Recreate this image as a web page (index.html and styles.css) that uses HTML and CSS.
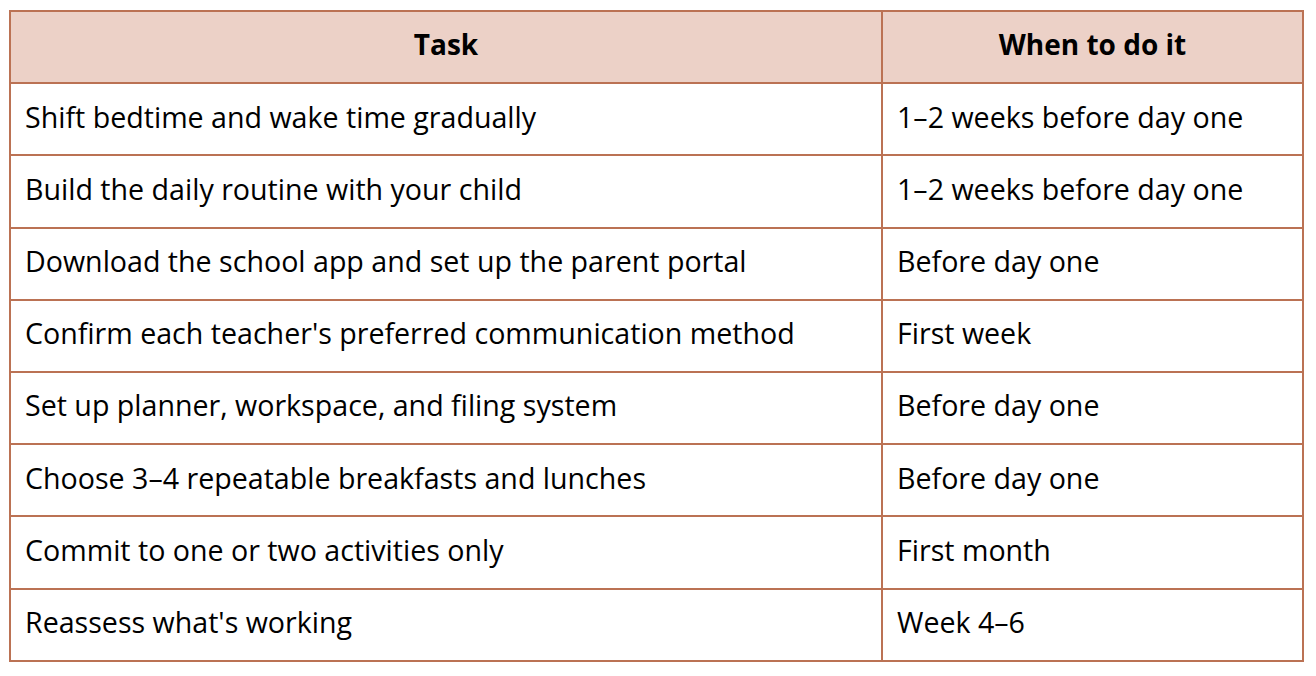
FILE: index.html
```html
<!DOCTYPE html>
<html>
<head>
<meta charset="utf-8">
<link rel="stylesheet" href="styles.css">
</head>
<body>
<table class="plan">
  <colgroup><col class="c1"><col class="c2"></colgroup>
  <thead>
    <tr><th>Task</th><th>When to do it</th></tr>
  </thead>
  <tbody>
    <tr><td>Shift bedtime and wake time gradually</td><td>1–2 weeks before day one</td></tr>
    <tr><td>Build the daily routine with your child</td><td>1–2 weeks before day one</td></tr>
    <tr><td>Download the school app and set up the parent portal</td><td>Before day one</td></tr>
    <tr><td>Confirm each teacher's preferred communication method</td><td>First week</td></tr>
    <tr><td>Set up planner, workspace, and filing system</td><td>Before day one</td></tr>
    <tr><td>Choose 3–4 repeatable breakfasts and lunches</td><td>Before day one</td></tr>
    <tr><td>Commit to one or two activities only</td><td>First month</td></tr>
    <tr><td>Reassess what's working</td><td>Week 4–6</td></tr>
  </tbody>
</table>
</body>
</html>
```
FILE: styles.css
```css
html, body { margin: 0; padding: 0; background: #fff; }
body { padding: 10px 0 0 9px; font-family: "Open Sans", Inter, sans-serif; color: #000; }
.plan { border-collapse: collapse; width: 1293px; table-layout: fixed; }
.c1 { width: 872px; }
.c2 { width: 421px; }
.plan th, .plan td { border: 2px solid #bb7254; height: 72.2px; padding: 0 14px 6px; font-size: 28.6px; line-height: 1.3; text-align: left; box-sizing: border-box; font-weight: 400; }
.plan th { background: #ecd1c7; text-align: center; font-weight: 700; font-size: 28px; }
```
